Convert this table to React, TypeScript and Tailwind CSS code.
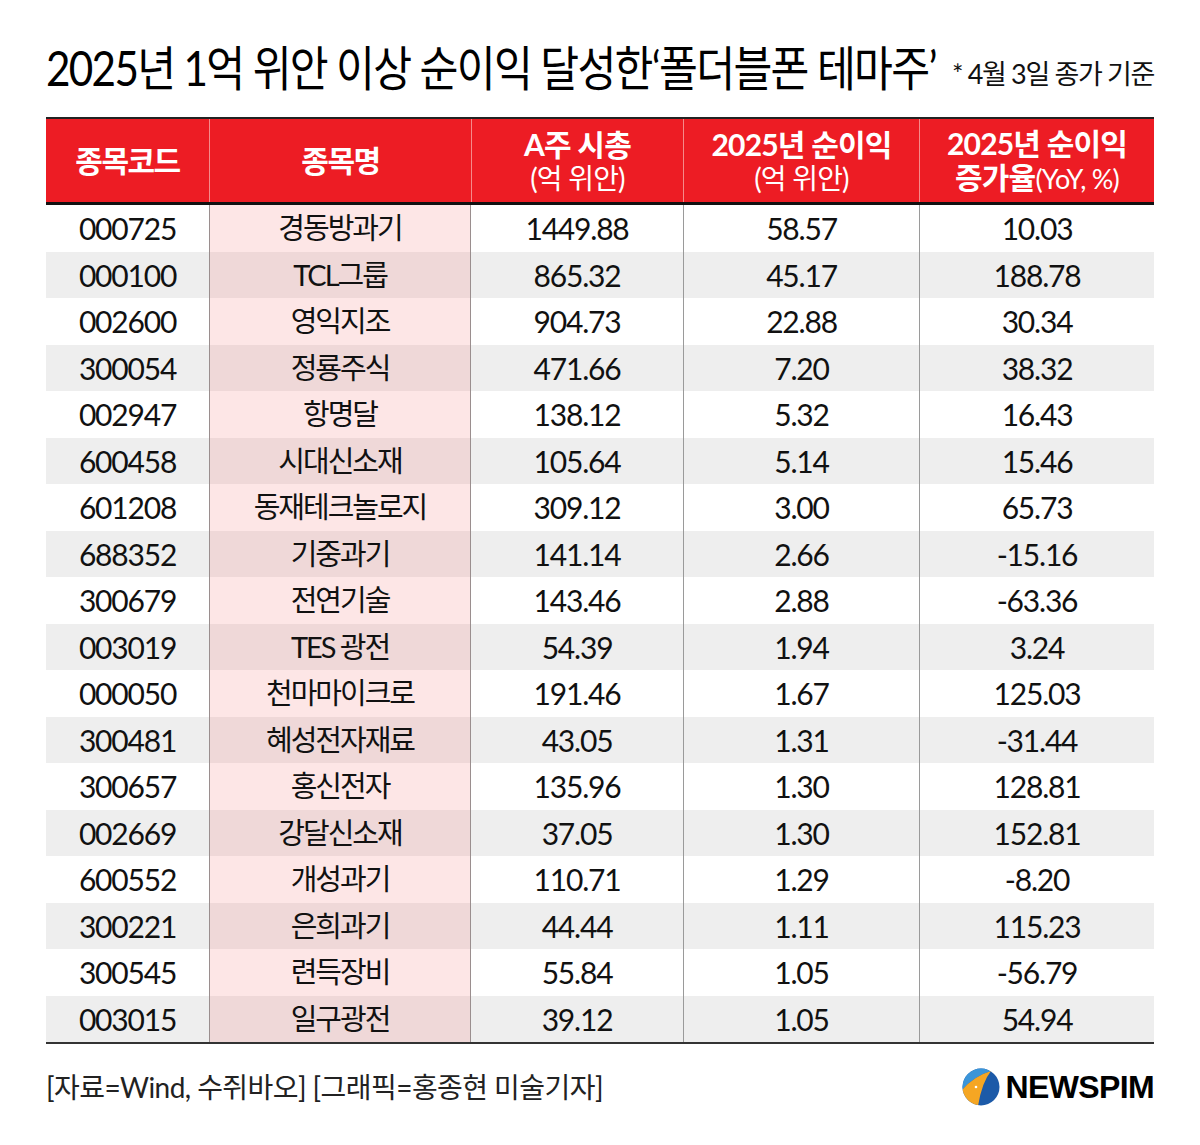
import React from 'react'

type Row = readonly [string, string, string, string, string]

const rows: Row[] = [
  ['000725', '경동방과기', '1449.88', '58.57', '10.03'],
  ['000100', 'TCL그룹', '865.32', '45.17', '188.78'],
  ['002600', '영익지조', '904.73', '22.88', '30.34'],
  ['300054', '정룡주식', '471.66', '7.20', '38.32'],
  ['002947', '항명달', '138.12', '5.32', '16.43'],
  ['600458', '시대신소재', '105.64', '5.14', '15.46'],
  ['601208', '동재테크놀로지', '309.12', '3.00', '65.73'],
  ['688352', '기중과기', '141.14', '2.66', '-15.16'],
  ['300679', '전연기술', '143.46', '2.88', '-63.36'],
  ['003019', 'TES 광전', '54.39', '1.94', '3.24'],
  ['000050', '천마마이크로', '191.46', '1.67', '125.03'],
  ['300481', '혜성전자재료', '43.05', '1.31', '-31.44'],
  ['300657', '홍신전자', '135.96', '1.30', '128.81'],
  ['002669', '강달신소재', '37.05', '1.30', '152.81'],
  ['600552', '개성과기', '110.71', '1.29', '-8.20'],
  ['300221', '은희과기', '44.44', '1.11', '115.23'],
  ['300545', '련득장비', '55.84', '1.05', '-56.79'],
  ['003015', '일구광전', '39.12', '1.05', '54.94'],
]

const cols = 'grid grid-cols-[163px_262px_212px_236px_235px]'
const font = "font-['Lato','Noto_Sans_CJK_KR',sans-serif]"

function NewspimLogo() {
  return (
    <svg width="38" height="38" viewBox="0 0 38 38" aria-hidden="true">
      <defs>
        <clipPath id="np-clip">
          <circle cx="19" cy="19" r="18.5" />
        </clipPath>
      </defs>
      <g clipPath="url(#np-clip)">
        <rect width="38" height="38" fill="#1c5aa8" />
        <path d="M0 0 H30 L29 3 Q12 8 0 22 Z" fill="#3b95d9" />
        <path d="M0 22 Q12 8 29 3 Q20 14 16 38 H0 Z" fill="#f5a623" />
        <circle cx="14" cy="19" r="1.3" fill="#ffffff" />
      </g>
    </svg>
  )
}

export default function App() {
  return (
    <div className={`w-[1200px] h-[1145px] bg-white px-[46px] pt-[42px] text-[#111] ${font}`}>
      {/* Title */}
      <div className="flex h-[52px] items-end justify-between">
        <div className="w-[890px] shrink-0">
          <h1 className="origin-left scale-x-[0.88] whitespace-nowrap text-[48px] leading-[52px] font-normal tracking-[-0.04em] text-black">
            2025년 1억 위안 이상 순이익 달성한‘폴더블폰 테마주’
          </h1>
        </div>
        <span className="whitespace-nowrap pb-[5px] text-[27px] leading-[30px] tracking-[-0.05em]">
          * 4월 3일 종가 기준
        </span>
      </div>

      {/* Table */}
      <div className="mt-[23px] border-t-2 border-[#222]">
        <div className={`${cols} h-[83px] bg-[#ed1c24] text-white`}>
          <div className="flex items-center justify-center text-[30px] font-bold tracking-[-0.05em]">종목코드</div>
          <div className="flex items-center justify-center border-l border-[#f58a8a] text-[30px] font-bold tracking-[-0.05em]">종목명</div>
          <div className="flex flex-col items-center justify-center border-l border-[#f58a8a] leading-[34px] tracking-[-0.05em]">
            <span className="text-[30px] font-bold">A주 시총</span>
            <span className="text-[28px]">(억 위안)</span>
          </div>
          <div className="flex flex-col items-center justify-center border-l border-[#f58a8a] leading-[34px] tracking-[-0.05em]">
            <span className="text-[30px] font-bold">2025년 순이익</span>
            <span className="text-[28px]">(억 위안)</span>
          </div>
          <div className="flex flex-col items-center justify-center border-l border-[#f58a8a] leading-[34px] tracking-[-0.05em]">
            <span className="text-[30px] font-bold">2025년 순이익</span>
            <span className="text-[30px] font-bold">
              증가율<span className="text-[27px] font-normal">(YoY, %)</span>
            </span>
          </div>
        </div>
        <div className="border-t-[3px] border-[#111]">
          {rows.map((r, i) => {
            const gray = i % 2 === 1
            return (
              <div
                key={r[0]}
                className={`${cols} h-[46.5px] text-[30px] leading-[44px] tracking-[-0.04em] ${gray ? 'bg-[#eeeeee]' : 'bg-white'}`}
              >
                <div className="flex items-center justify-center">{r[0]}</div>
                <div
                  className={`flex items-center justify-center border-l border-r border-[#9a8e8e] text-[29px] tracking-[-0.07em] ${gray ? 'bg-[#efd8d8]' : 'bg-[#fde6e6]'}`}
                >
                  {r[1]}
                </div>
                <div className="flex items-center justify-center">{r[2]}</div>
                <div className="flex items-center justify-center border-l border-[#9a9a9a]">{r[3]}</div>
                <div className="flex items-center justify-center border-l border-[#9a9a9a]">{r[4]}</div>
              </div>
            )
          })}
        </div>
        <div className="border-t-2 border-[#333]" />
      </div>

      {/* Footer */}
      <div className="mt-[22px] flex h-[42px] items-center justify-between">
        <span className="text-[28px] tracking-[-0.02em] text-[#222]">
          [자료=Wind, 수쥐바오] [그래픽=홍종현 미술기자]
        </span>
        <div className="flex items-center gap-[6px]">
          <NewspimLogo />
          <span className="font-['Liberation_Sans',Arial,sans-serif] text-[32px] font-bold leading-none tracking-[-0.02em] text-black">
            NEWSPIM
          </span>
        </div>
      </div>
    </div>
  )
}
